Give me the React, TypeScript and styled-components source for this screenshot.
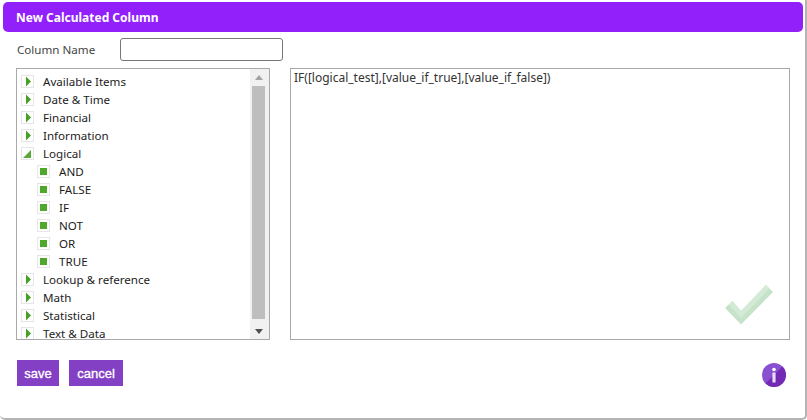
import React from "react";
import styled, { createGlobalStyle } from "styled-components";

const GlobalStyle = createGlobalStyle`
  html, body {
    margin: 0;
    padding: 0;
    background: #ffffff;
  }
  * {
    box-sizing: border-box;
  }
`;

const Dialog = styled.div`
  width: 807px;
  height: 420px;
  padding: 2px 2px 0 3px;
  background: #ffffff;
  border-right: 2px solid #b4b4b4;
  border-bottom: 2px solid #b4b4b4;
  border-bottom-right-radius: 5px;
  border-bottom-left-radius: 5px;
  font-family: "Noto Sans", sans-serif;
  color: #222222;
  display: flex;
  flex-direction: column;
`;

const Header = styled.div`
  height: 30px;
  padding-left: 13px;
  display: flex;
  align-items: center;
  background: #9120fb;
  border-radius: 5px;
  color: #ffffff;
  font-size: 12px;
  font-weight: 700;
`;

const NameRow = styled.div`
  margin-top: 6px;
  padding-left: 14px;
  display: flex;
  align-items: center;
  height: 23px;
`;

const NameLabel = styled.label`
  width: 103px;
  font-size: 11.6px;
  color: #444444;
`;

const NameInput = styled.input`
  width: 163px;
  height: 23px;
  border: 1px solid #767676;
  border-radius: 3px;
  background: #ffffff;
  outline: none;
`;

const Panels = styled.div`
  margin-top: 7px;
  padding-left: 13px;
  display: flex;
  gap: 20px;
`;

const TreeBox = styled.div`
  width: 254px;
  height: 272px;
  border: 1px solid #a9a9a9;
  display: flex;
`;

const TreeList = styled.ul`
  flex: 1;
  margin: 0;
  padding: 4px 0 0 4px;
  list-style: none;
  overflow: hidden;
`;

const Row = styled.li<{ $leaf?: boolean }>`
  height: 18px;
  padding-left: ${(p) => (p.$leaf ? "16px" : "0")};
  display: flex;
  align-items: center;
  font-size: 11.6px;
  line-height: 16px;
  color: #1c1c1c;
  white-space: nowrap;
`;

const Toggle = styled.span`
  width: 13px;
  height: 13px;
  margin: 0 9px 1px 0;
  border: 1px solid #e6e6e6;
  background: #ffffff;
  display: flex;
  align-items: center;
  justify-content: center;
  flex: none;
`;

const Bullet = styled.span`
  display: block;
  width: 7px;
  height: 7px;
  background: #4fa82c;
`;

const ScrollBar = styled.div`
  width: 19px;
  padding: 0 4px 0 2px;
  background: #f1f1f1;
  display: flex;
  flex-direction: column;
  align-items: stretch;
`;

const ScrollButton = styled.div<{ $down?: boolean }>`
  height: ${(p) => (p.$down ? "20px" : "17px")};
  padding-top: ${(p) => (p.$down ? "4px" : "0")};
  display: flex;
  align-items: center;
  justify-content: center;
`;

const ScrollThumb = styled.div`
  flex: 1;
  background: #bebebe;
`;

const FormulaBox = styled.div`
  position: relative;
  width: 500px;
  height: 272px;
  padding: 1px 3px;
  border: 1px solid #a9a9a9;
  font-size: 12px;
  line-height: 16px;
  color: #333333;
`;

const CheckMark = styled.svg`
  position: absolute;
  right: 16px;
  bottom: 14px;
`;

const Footer = styled.div`
  margin-top: 20px;
  padding: 0 17px 0 14px;
  display: flex;
  align-items: flex-start;
  justify-content: space-between;
`;

const Buttons = styled.div`
  display: flex;
  gap: 10px;
`;

const Button = styled.button<{ $width: number }>`
  width: ${(p) => p.$width}px;
  height: 26px;
  padding: 0;
  border: 0;
  background: #8340c4;
  color: #ffffff;
  font-family: "Liberation Sans", sans-serif;
  font-size: 13px;
  -webkit-text-stroke: 0.3px #ffffff;
`;

const InfoSvg = styled.svg`
  margin-top: 3px;
`;

const Arrow = ({ open }: { open?: boolean }) => (
  <svg width="11" height="11" viewBox="0 0 11 11">
    {open ? (
      <polygon points="1,10 9,10 9,2" fill="#5aa83a" />
    ) : (
      <polygon points="4,0.5 9,5.5 4,10.5" fill="#46a024" />
    )}
  </svg>
);

const InfoIcon = () => (
  <InfoSvg width="24" height="24" viewBox="0 0 24 24">
    <circle cx="12" cy="12" r="12" fill="#8a50d2" />
    <path d="M20.5 3.5A12 12 0 0 1 3.5 20.5Z" fill="#7429b4" />
    <circle cx="12" cy="6.5" r="1.8" fill="#ffffff" />
    <rect x="10.4" y="9.5" width="3.2" height="10" rx="0.6" fill="#e6dcf6" />
  </InfoSvg>
);

const before = ["Available Items", "Date & Time", "Financial", "Information"];
const logical = ["AND", "FALSE", "IF", "NOT", "OR", "TRUE"];
const after = ["Lookup & reference", "Math", "Statistical", "Text & Data"];

const App: React.FC = () => {
  return (
    <>
      <GlobalStyle />
      <Dialog>
        <Header>New Calculated Column</Header>
        <NameRow>
          <NameLabel>Column Name</NameLabel>
          <NameInput type="text" />
        </NameRow>
        <Panels>
          <TreeBox>
            <TreeList>
              {before.map((item) => (
                <Row key={item}>
                  <Toggle><Arrow /></Toggle>
                  {item}
                </Row>
              ))}
              <Row>
                <Toggle><Arrow open /></Toggle>
                Logical
              </Row>
              {logical.map((item) => (
                <Row key={item} $leaf>
                  <Toggle><Bullet /></Toggle>
                  {item}
                </Row>
              ))}
              {after.map((item) => (
                <Row key={item}>
                  <Toggle><Arrow /></Toggle>
                  {item}
                </Row>
              ))}
            </TreeList>
            <ScrollBar>
              <ScrollButton>
                <svg width="8" height="5" viewBox="0 0 8 5">
                  <polygon points="0,5 8,5 4,0" fill="#a3a3a3" />
                </svg>
              </ScrollButton>
              <ScrollThumb />
              <ScrollButton $down>
                <svg width="8" height="5" viewBox="0 0 8 5">
                  <polygon points="0,0 8,0 4,5" fill="#505050" />
                </svg>
              </ScrollButton>
            </ScrollBar>
          </TreeBox>
          <FormulaBox>
            IF([logical_test],[value_if_true],[value_if_false])
            <CheckMark width="48" height="40" viewBox="0 0 48 40">
              <polygon points="0,23 7.5,16 16,26 41,0 48,7 16,39.5" fill="#c6e3ca" />
              <polygon points="7.5,16 16,26 41,0 44.5,3.5 16,33 3.7,19.5" fill="#d3ead6" />
            </CheckMark>
          </FormulaBox>
        </Panels>
        <Footer>
          <Buttons>
            <Button $width={42}>save</Button>
            <Button $width={54}>cancel</Button>
          </Buttons>
          <InfoIcon />
        </Footer>
      </Dialog>
    </>
  );
};

export default App;
